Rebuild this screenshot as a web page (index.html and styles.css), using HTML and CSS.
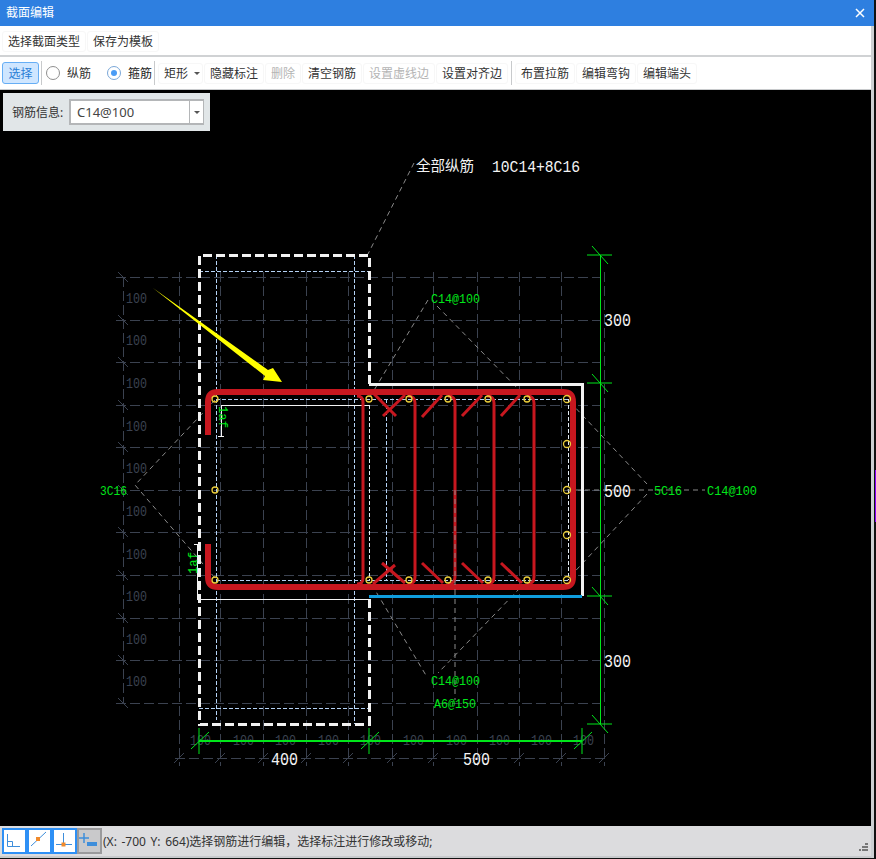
FILE: index.html
```
<!DOCTYPE html>
<html lang="zh-CN">
<head>
<meta charset="utf-8">
<title>截面编辑</title>
<link rel="stylesheet" href="styles.css">
</head>
<body>
<div class="window">
  <header class="titlebar">
    <span class="title">截面编辑</span>
    <svg class="close" width="10" height="10" viewBox="0 0 10 10"><path d="M1 1L9 9M9 1L1 9"/></svg>
  </header>
  <div class="body">
    <nav class="menubar">
      <button class="btn">选择截面类型</button>
      <button class="btn">保存为模板</button>
    </nav>
    <div class="toolbar">
      <button class="btn active">选择</button>
      <span class="sep"></span>
      <label class="radio"><span class="dot"></span>纵筋</label>
      <label class="radio on"><span class="dot"></span>箍筋</label>
      <span class="sep sep-b"></span>
      <button class="btn caret-btn">矩形<span class="caret"></span></button>
      <button class="btn">隐藏标注</button>
      <button class="btn off">删除</button>
      <button class="btn">清空钢筋</button>
      <button class="btn off">设置虚线边</button>
      <button class="btn">设置对齐边</button>
      <span class="sep sep-c"></span>
      <button class="btn">布置拉筋</button>
      <button class="btn">编辑弯钩</button>
      <button class="btn">编辑端头</button>
    </div>
    <main class="canvas">
      <div class="info">
        <span class="info-label">钢筋信息:</span>
        <div class="combo"><span class="combo-text">C14@100</span><span class="combo-arrow"><span class="caret"></span></span></div>
      </div>
      <svg class="drawing" width="871" height="736" viewBox="0 90 871 736">
        <!-- grid -->
        <path class="grid" d="M116 277H600M116 320H600M116 362H600M116 405H600M116 447H600M116 490H600M116 532H600M116 575H600M116 618H600M116 660H600M116 703H600M175 758H605"/>
        <path class="grid" d="M123 277V703M179 272V766M220 272V766M263 272V766M306 272V766M348 272V766M392 272V766M433 272V766M477 272V766M519 272V766M561 272V766M604 272V766"/>
        <path class="tick" d="M118 272L128 282M118 315L128 325M118 357L128 367M118 400L128 410M118 442L128 452M118 485L128 495M118 527L128 537M118 570L128 580M118 613L128 623M118 655L128 665M118 698L128 708M174 763L184 753M215 763L225 753M258 763L268 753M301 763L311 753M343 763L353 753M387 763L397 753M428 763L438 753M472 763L482 753M514 763L524 753M556 763L566 753M599 763L609 753"/>
        <g class="gray-label">
          <text x="126" y="303" textLength="21" lengthAdjust="spacingAndGlyphs">100</text>
          <text x="126" y="345" textLength="21" lengthAdjust="spacingAndGlyphs">100</text>
          <text x="126" y="388" textLength="21" lengthAdjust="spacingAndGlyphs">100</text>
          <text x="126" y="431" textLength="21" lengthAdjust="spacingAndGlyphs">100</text>
          <text x="126" y="473" textLength="21" lengthAdjust="spacingAndGlyphs">100</text>
          <text x="126" y="516" textLength="21" lengthAdjust="spacingAndGlyphs">100</text>
          <text x="126" y="559" textLength="21" lengthAdjust="spacingAndGlyphs">100</text>
          <text x="126" y="601" textLength="21" lengthAdjust="spacingAndGlyphs">100</text>
          <text x="126" y="644" textLength="21" lengthAdjust="spacingAndGlyphs">100</text>
          <text x="126" y="686" textLength="21" lengthAdjust="spacingAndGlyphs">100</text>
          <text x="190" y="745" textLength="21" lengthAdjust="spacingAndGlyphs">100</text>
          <text x="233" y="745" textLength="21" lengthAdjust="spacingAndGlyphs">100</text>
          <text x="275" y="745" textLength="21" lengthAdjust="spacingAndGlyphs">100</text>
          <text x="318" y="745" textLength="21" lengthAdjust="spacingAndGlyphs">100</text>
          <text x="360" y="745" textLength="21" lengthAdjust="spacingAndGlyphs">100</text>
          <text x="403" y="745" textLength="21" lengthAdjust="spacingAndGlyphs">100</text>
          <text x="446" y="745" textLength="21" lengthAdjust="spacingAndGlyphs">100</text>
          <text x="489" y="745" textLength="21" lengthAdjust="spacingAndGlyphs">100</text>
          <text x="531" y="745" textLength="21" lengthAdjust="spacingAndGlyphs">100</text>
          <text x="573" y="745" textLength="21" lengthAdjust="spacingAndGlyphs">100</text>
        </g>
        <!-- construction lines -->
        <path class="pale" d="M199 271H369M216 255V720M354 255V724M216 399H568M216 580H568M199 708H369M386 399V580"/>
        <path class="pale-white" d="M369 405V580M568 399V580"/>
        <!-- leaders -->
        <path class="leader" d="M414 163L368 254M428 300L370 397M437 306L522 393M570 402L647 484M647 494L567 580M567 490H705M215 400L135 485L215 578M372 585L427 677M520 588L438 673M455 590V700"/>
        <!-- outlines -->
        <path class="outline-dash" d="M369 384V255H199.500V724H369V597"/>
        <path class="outline" d="M369 384H582V596"/>
        <path class="edge-blue" d="M369 596.500H582"/>
        <path class="thin" d="M197 544V599H369M221 436V405H369"/>
        <path class="thin" d="M194 544H200M218 436H224"/>
        <!-- rebar -->
        <path class="bar" d="M208 435V402Q208 392 218 392H563Q573 392 573 402V577Q573 587 563 587H218Q208 587 208 577V544"/>
        <path class="tie" d="M357 396Q363 396 363 402V578Q363 584 357 584M408 396Q415 396 415 403V577Q415 584 408 584M448 396Q455 396 455 403V577Q455 584 448 584M487 396Q494 396 494 403V577Q494 584 487 584M527 396Q534 396 534 403V577Q534 584 527 584"/>
        <path class="tie" d="M373 393L396 416M405 395L383 416M442 395L422 417M482 395L462 416M520 395L501 416M382 563L405 583M395 565L373 584M422 563L443 583M462 563L483 583M501 563L522 583"/>
        <path class="hairline" d="M455 490V590"/>
        <!-- longitudinal bars -->
        <g class="node">
          <circle cx="215" cy="399" r="3"/><circle cx="215" cy="490" r="3"/><circle cx="215" cy="580" r="3"/>
          <circle cx="369" cy="399" r="3"/><circle cx="409" cy="399" r="3"/><circle cx="448" cy="399" r="3"/><circle cx="488" cy="399" r="3"/><circle cx="527" cy="399" r="3"/><circle cx="567" cy="399" r="3.500"/>
          <circle cx="567" cy="444" r="3.500"/><circle cx="567" cy="490" r="3.500"/><circle cx="567" cy="535" r="3.500"/>
          <circle cx="369" cy="580" r="3"/><circle cx="409" cy="580" r="3"/><circle cx="448" cy="580" r="3"/><circle cx="488" cy="580" r="3"/><circle cx="527" cy="580" r="3"/><circle cx="567" cy="580" r="3.500"/>
        </g>
        <!-- dimensions -->
        <path class="dim-line" d="M600.500 255V724M199 741H582"/>
        <path class="dim-tick" d="M587 255H612M592 246L608 264M587 383H612M592 374L608 392M587 596H612M592 587L608 605M587 724H612M592 715L608 733M199 728V754M191 749L209 732M369 728V754M361 749L379 732M582 728V754M574 749L592 732"/>
        <g class="dim-text">
          <text x="604" y="326" textLength="27" lengthAdjust="spacingAndGlyphs">300</text>
          <text x="604" y="497" textLength="27" lengthAdjust="spacingAndGlyphs">500</text>
          <text x="604" y="667" textLength="27" lengthAdjust="spacingAndGlyphs">300</text>
          <text x="271" y="765" textLength="27" lengthAdjust="spacingAndGlyphs">400</text>
          <text x="463" y="765" textLength="27" lengthAdjust="spacingAndGlyphs">500</text>
        </g>
        <text class="note" x="416" y="171">全部纵筋</text>
        <text class="note-latin" x="492" y="172" textLength="88" lengthAdjust="spacingAndGlyphs">10C14+8C16</text>
        <g class="green-text">
          <text x="431" y="303" textLength="49" lengthAdjust="spacingAndGlyphs">C14@100</text>
          <text x="431" y="685" textLength="49" lengthAdjust="spacingAndGlyphs">C14@100</text>
          <text x="434" y="708" textLength="42" lengthAdjust="spacingAndGlyphs">A6@150</text>
          <text x="654" y="495" textLength="28" lengthAdjust="spacingAndGlyphs">5C16</text>
          <text x="707" y="495" textLength="50" lengthAdjust="spacingAndGlyphs">C14@100</text>
          <text x="100" y="495" textLength="27" lengthAdjust="spacingAndGlyphs">3C16</text>
          <text transform="translate(219 406) rotate(90)" textLength="22" lengthAdjust="spacingAndGlyphs">1af</text>
          <text transform="translate(197 574) rotate(-90)" textLength="22" lengthAdjust="spacingAndGlyphs">1af</text>
        </g>
        <polygon class="arrow" points="153,288 268,370 273,368 282,382 263,380 265,376"/>
      </svg>
    </main>
    <footer class="statusbar">
      <button class="snap">
        <svg width="21" height="22" viewBox="0 0 21 22"><path class="snap-line" d="M3.500 4V16.500H16M3.500 11.500H8.500V16.500"/></svg>
      </button>
      <button class="snap">
        <svg width="21" height="22" viewBox="0 0 21 22"><path class="snap-line" d="M2 16L17 2"/><rect class="snap-mark" x="7" y="7" width="4" height="4"/></svg>
      </button>
      <button class="snap">
        <svg width="21" height="22" viewBox="0 0 21 22"><path class="snap-line" d="M2 14.500H18M9.500 3V14.500"/><rect class="snap-mark" x="7.500" y="12.500" width="4" height="4"/></svg>
      </button>
      <button class="snap snap-off">
        <svg width="21" height="22" viewBox="0 0 21 22"><path class="snap-plus" d="M0 8H10M5 3V13"/><rect class="snap-block" x="8" y="12" width="10" height="4"/></svg>
      </button>
      <span class="status-text">(X: -700 Y: 664)选择钢筋进行编辑，选择标注进行修改或移动;</span>
      <svg class="grip" width="9" height="9" viewBox="0 0 9 9"><path d="M6 0h3v2H6zM3 3h3v2H3zM6 3h3v2H6zM0 6h2v2H0zM3 6h3v2H3zM6 6h3v2H6z"/></svg>
    </footer>
  </div>
</div>
<span class="edge-mark"></span>
</body>
</html>
```
FILE: styles.css
```
html, body {
  margin: 0;
  height: 100%;
  background: #111;
  overflow: hidden;
}
* { box-sizing: border-box; }
body, button, label {
  font-family: "Noto Sans", "Noto Sans CJK SC", sans-serif;
  font-size: 12px;
  color: #333;
}
.window {
  width: 874px;
  height: 858px;
  display: flex;
  flex-direction: column;
  background: #d0d2d4;
}
.edge-mark {
  position: absolute;
  left: 875px;
  top: 470px;
  width: 1px;
  height: 52px;
  background: #8a00ff;
}
.titlebar {
  height: 26px;
  flex: none;
  background: #2e7fe0;
  display: flex;
  align-items: center;
  justify-content: space-between;
  padding: 0 9px 0 6px;
}
.title { color: #fff; font-size: 12px; line-height: 26px; }
.close path { stroke: #fff; stroke-width: 1.500; fill: none; }
.body {
  flex: 1;
  min-height: 0;
  display: flex;
  flex-direction: column;
  border-right: 3px solid #ccd0d2;
}
.menubar {
  height: 29px;
  flex: none;
  background: #fff;
  display: flex;
  align-items: center;
  gap: 1px;
  padding: 1px 0 0 2px;
}
.btn {
  height: 21px;
  padding: 0 5px;
  margin: 0;
  border: 1px solid #f7f7f7;
  border-radius: 3px;
  background: #fff;
  line-height: 19px;
  white-space: nowrap;
  display: inline-flex;
  align-items: center;
  flex: none;
}
.toolbar {
  height: 33px;
  flex: none;
  margin-top: 2px;
  background: #fff;
  border-bottom: 1px solid #c8cacc;
  display: flex;
  align-items: center;
  gap: 1px;
  padding-left: 2px;
}
.btn.active {
  width: 37px;
  height: 22px;
  padding: 0;
  justify-content: center;
  background: #cfe6ff;
  border-color: #66aef5;
  color: #2a7fd6;
}
.btn.off { color: #b4b4b4; }
.caret-btn { width: 45px; margin-left: 2px; }
.caret {
  width: 0;
  height: 0;
  border: 3px solid transparent;
  border-top: 3px solid #555;
  border-bottom: 0;
  display: inline-block;
}
.caret-btn .caret { margin-left: 6px; }
.sep {
  width: 1px;
  height: 24px;
  background: #c8cacc;
  margin-left: 1px;
  flex: none;
}
.sep-b { margin-left: 0; }
.sep-c { margin: 0 2px 0 2px; }
.radio {
  display: inline-flex;
  align-items: center;
  margin-left: 3px;
  width: 56px;
  flex: none;
}
.radio + .radio { margin-left: 4px; width: 46px; color: #222; }
.dot {
  width: 14px;
  height: 14px;
  border: 1px solid #8f8f8f;
  border-radius: 50%;
  background: #fff;
  margin-right: 7px;
  flex: none;
  display: flex;
  align-items: center;
  justify-content: center;
}
.on .dot { border-color: #7aa7d8; }
.on .dot::after {
  content: "";
  width: 6px;
  height: 6px;
  border-radius: 50%;
  background: #4a9cf5;
}
.canvas {
  flex: 1;
  min-height: 0;
  background: #000;
  position: relative;
  overflow: hidden;
}
.drawing { display: block; }
.info {
  position: absolute;
  left: 3px;
  top: 3px;
  width: 207px;
  height: 38px;
  background: #e1e6e8;
  display: flex;
  align-items: center;
  padding-left: 9px;
}
.info-label { width: 57px; flex: none; color: #333; }
.combo {
  width: 135px;
  height: 26px;
  border: 2px solid #b4b6b8;
  border-right-width: 1px;
  background: #fff;
  display: flex;
  align-items: center;
}
.combo-text { flex: 1; padding-left: 6px; font-size: 13px; color: #444; }
.combo-arrow {
  width: 14px;
  height: 100%;
  border-left: 1px solid #b4b6b8;
  display: flex;
  align-items: center;
  justify-content: center;
}
.grid { stroke: #3b4250; stroke-width: 1; fill: none; stroke-dasharray: 10 4; shape-rendering: crispEdges; }
.tick { stroke: #3b4250; stroke-width: 1; fill: none; }
.gray-label text {
  fill: #3b4250;
  font-family: "Liberation Mono", monospace;
  font-size: 14px;
}
.pale { stroke: #b4d2f5; stroke-width: 1; fill: none; stroke-dasharray: 4 2; shape-rendering: crispEdges; }
.pale-white { stroke: #e4ecf4; stroke-width: 1; fill: none; stroke-dasharray: 4 2; shape-rendering: crispEdges; }
.leader { stroke: #8a8a8a; stroke-width: 1; fill: none; stroke-dasharray: 5 4; }
.outline-dash { stroke: #f2f2f2; stroke-width: 3; fill: none; stroke-dasharray: 9 4; shape-rendering: crispEdges; }
.outline { stroke: #f2f2f2; stroke-width: 3; fill: none; shape-rendering: crispEdges; }
.edge-blue { stroke: #0f9ddd; stroke-width: 3; fill: none; shape-rendering: crispEdges; }
.thin { stroke: #f4f4f4; stroke-width: 1; fill: none; shape-rendering: crispEdges; }
.bar { stroke: #c7171f; stroke-width: 6; fill: none; }
.tie { stroke: #c7171f; stroke-width: 3; fill: none; }
.hairline { stroke: #8a8a8a; stroke-width: 1; fill: none; stroke-dasharray: 5 4; }
.node circle { stroke: #e9cc3a; stroke-width: 1.300; fill: none; }
.dim-line { stroke: #00e61a; stroke-width: 1.500; fill: none; shape-rendering: crispEdges; }
.dim-tick { stroke: #00e61a; stroke-width: 1; fill: none; }
.dim-text text {
  fill: #f4f4f4;
  font-family: "Liberation Mono", monospace;
  font-size: 18px;
}
.note { fill: #f4f4f4; font-family: "Noto Sans CJK SC", sans-serif; font-size: 14.500px; }
.note-latin { fill: #f4f4f4; font-family: "Liberation Mono", monospace; font-size: 16px; }
.green-text text {
  fill: #00e61a;
  font-family: "Liberation Mono", monospace;
  font-size: 13px;
}
.arrow { fill: #ffff00; }
.statusbar {
  height: 32px;
  flex: none;
  background: #dcdcde;
  border-bottom: 2px solid #c8cacc;
  display: flex;
  align-items: center;
  padding: 0 3px 0 2px;
}
.snap {
  width: 25px;
  height: 26px;
  padding: 0;
  margin: 0;
  border: 2px solid #2e90f5;
  background: #fff;
  display: flex;
  align-items: center;
  justify-content: center;
  flex: none;
}
.snap-off { background: #c9c9cb; border-color: #9a9a9c; }
.snap-line { stroke: #3e8edb; stroke-width: 1; fill: none; }
.snap-plus { stroke: #3e8edb; stroke-width: 1.500; fill: none; }
.snap-mark { fill: #f08a2c; }
.snap-block { fill: #3e8edb; }
.status-text { flex: 1; margin-left: 1px; color: #333; white-space: nowrap; word-spacing: 1.500px; }
.grip { align-self: flex-end; margin-bottom: 4px; }
.grip path { fill: #777; }
```
